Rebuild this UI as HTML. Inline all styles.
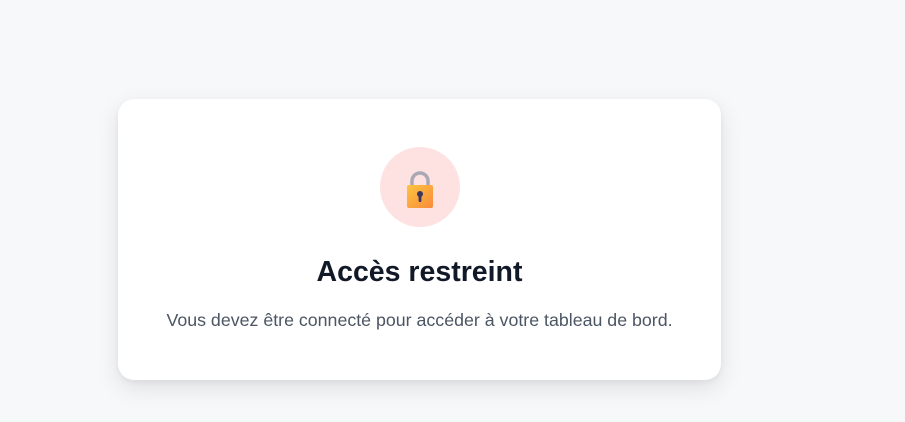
<!DOCTYPE html>
<html><head><meta charset="utf-8"><style>
html,body{margin:0;padding:0}
body{width:905px;height:422px;background:#f7f8fa;font-family:"Liberation Sans",sans-serif;position:relative;overflow:hidden}
.card{position:absolute;left:118px;top:99px;width:603px;height:281px;background:#fff;border-radius:16px;box-shadow:0 8px 24px rgba(0,0,0,0.10),0 2px 6px rgba(0,0,0,0.05)}
.circ{position:absolute;left:262px;top:48px;width:80px;height:80px;border-radius:50%;background:#fee2e2}
.circ svg{position:absolute;left:23px;top:24px}
h1{position:absolute;left:0;right:0;top:158px;margin:0;text-align:center;font-size:28.5px;line-height:30px;font-weight:bold;color:#111827}
p{position:absolute;left:0;right:0;top:211px;margin:0;text-align:center;font-size:17.8px;line-height:20px;color:#4b5563}
</style></head><body>
<div class="card">
<div class="circ"><svg width="34" height="38" viewBox="0 0 34 38">
<defs><linearGradient id="g" x1="0" y1="0" x2="1" y2="1"><stop offset="0" stop-color="#fcc43f"/><stop offset="1" stop-color="#f98a3c"/></linearGradient></defs>
<path d="M9 15 V10 a8 8 0 0 1 16 0 V15" fill="none" stroke="#a9a9b5" stroke-width="3.5"/>
<rect x="4" y="14" width="26" height="23" rx="2" fill="url(#g)"/>
<circle cx="17" cy="23" r="3" fill="#3b3561"/><rect x="15.6" y="24" width="2.8" height="7" rx="1.4" fill="#3b3561"/>
</svg></div>
<h1>Accès restreint</h1>
<p>Vous devez être connecté pour accéder à votre tableau de bord.</p>
</div>
</body></html>
